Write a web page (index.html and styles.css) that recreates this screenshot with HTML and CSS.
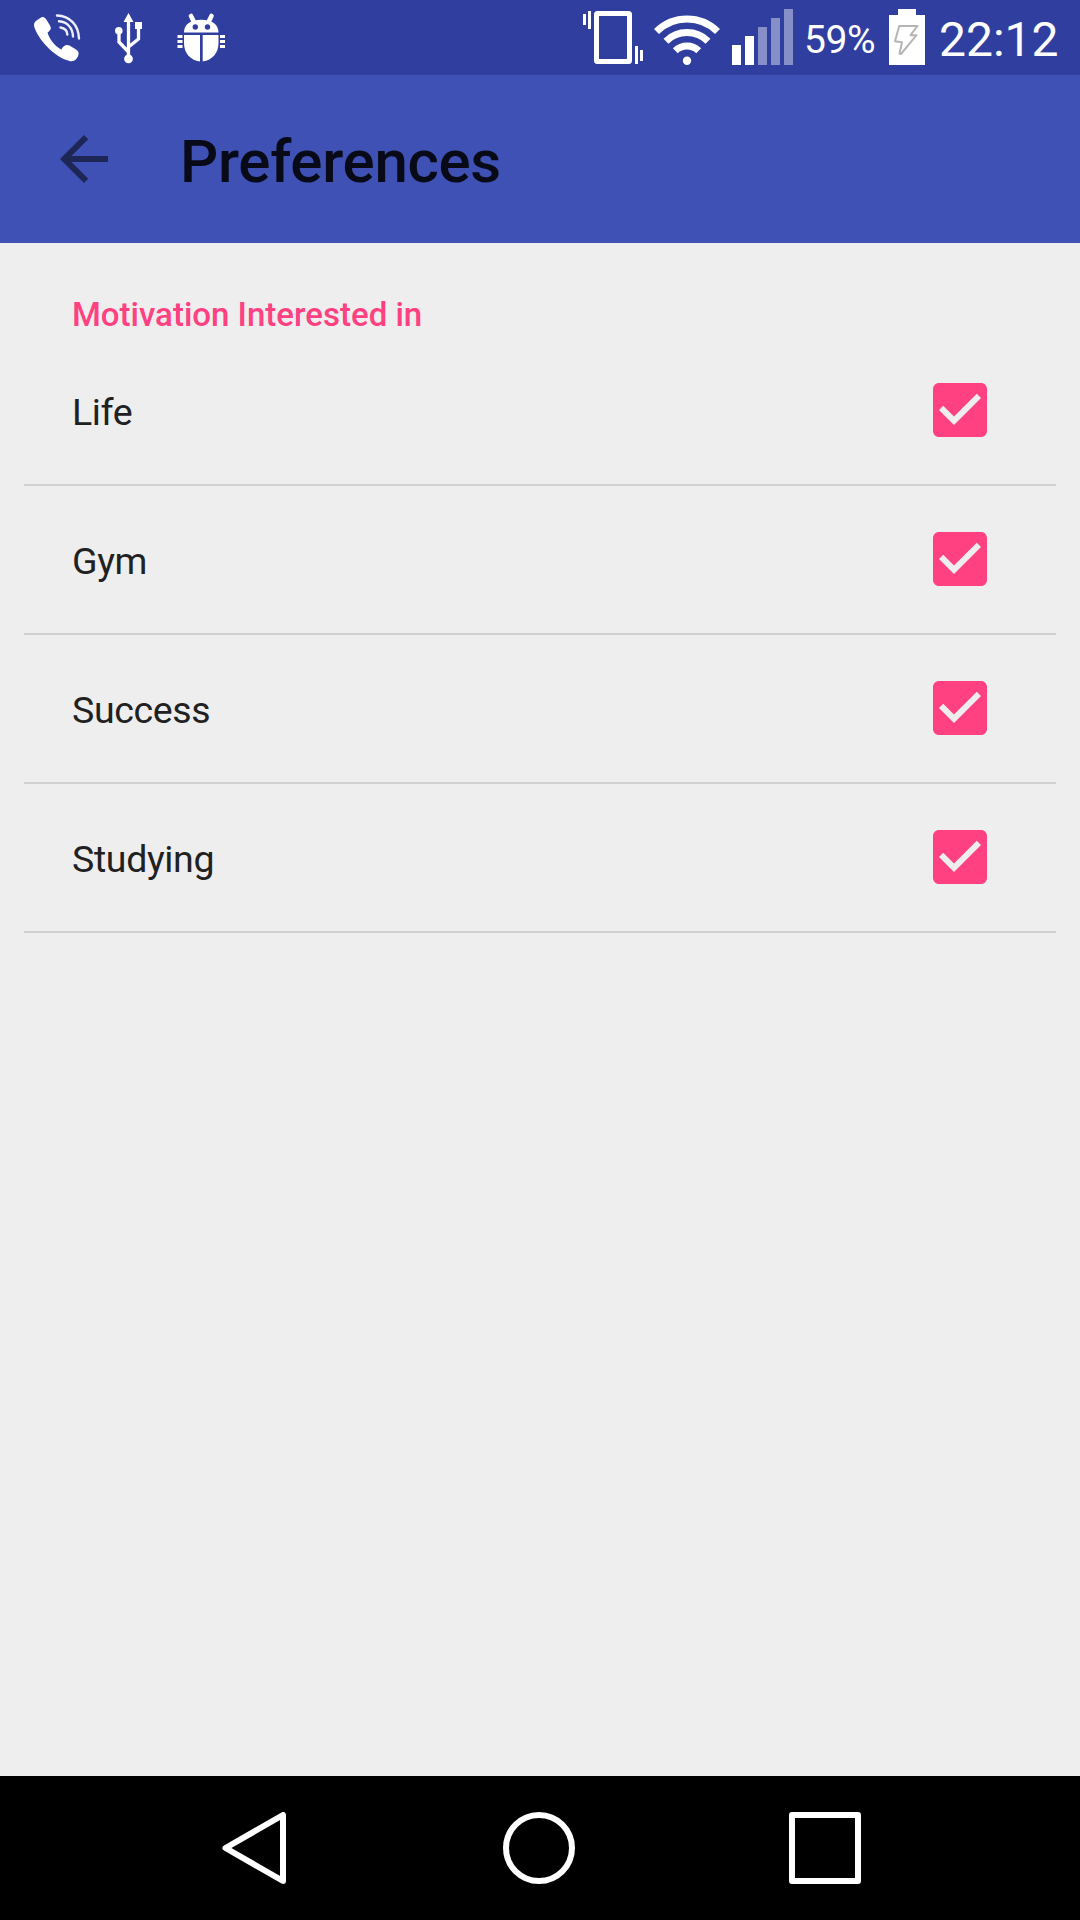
FILE: index.html
```html
<!DOCTYPE html>
<html lang="en">
<head>
  <meta charset="UTF-8">
  <title>Preferences</title>
  <link rel="stylesheet" href="styles.css">
</head>
<body>

  <div class="status-bar">
    <div class="status-left">
      <svg class="icon-phone" width="54" height="75" viewBox="30 0 54 75">
        <path fill="#fff" d="M36.500 20.500L41.500 17.300C43.500 16.500 45 17.500 46.300 19.500L50 25.500C51.500 28.500 51 30.200 47.500 32.500C49 38.500 55 46.500 61.500 49.500C63 45.500 66.500 44 69.500 45.500L76 49.500C79 51.500 79 53.500 78 56.200C76.500 60 73 62 69.500 61C54 57 38 39 34.300 27C33.500 24 34.300 22 36.500 20.500Z"/>
        <g fill="none" stroke="#eceef8" stroke-width="2.400" stroke-linecap="round">
          <path d="M57 15.500C70 16 78.500 25 79 38.500"/>
          <path d="M59 21.300C67.500 22 72.700 28 73 36.500"/>
          <path d="M60.500 27.500C65 28.200 67.200 31 67.300 34.500"/>
        </g>
      </svg>
      <svg class="icon-usb" width="30" height="75" viewBox="114 0 30 75">
        <g fill="none" stroke="#fff" stroke-width="3.300">
          <path d="M128.500 19V58M119 31V42L128.500 52M138.500 26V39L128.500 47"/>
        </g>
        <path fill="#fff" d="M128.500 13L133.500 22H123.500ZM135 22H142V29H135Z"/>
        <circle cx="118.800" cy="30.700" r="3.800" fill="#fff"/>
        <circle cx="128.500" cy="58.800" r="4.400" fill="#fff"/>
      </svg>
      <svg class="icon-bug" width="50" height="75" viewBox="176 0 50 75">
        <path fill="none" stroke="#fff" stroke-width="4.600" stroke-linecap="round" d="M191 16L194 22M211.500 16L208.500 22"/>
        <path fill="#fff" d="M184 32.500C184 24.500 190 19.700 201.300 19.700S218.500 24.500 218.500 32.500ZM184 35H200V61.500C190 60 184 53 184 43ZM202.700 35H218.500V43C218.500 53 212.500 60 202.700 61.500Z"/>
        <path fill="#fff" d="M177.500 35H182.500V38H177.500ZM177.500 40H182.500V43H177.500ZM177.500 45H182.500V48H177.500ZM220 35H225V38H220ZM220 40H225V43H220ZM220 45H225V48H220Z"/>
        <circle cx="195.300" cy="27" r="2.700" fill="#303f9f"/>
        <circle cx="207.500" cy="27" r="2.700" fill="#303f9f"/>
      </svg>
    </div>

    <div class="status-right">
      <svg class="icon-vibrate" width="62" height="75" viewBox="582 0 62 75">
        <rect x="596.500" y="13.500" width="33" height="48" rx="1" fill="none" stroke="#fff" stroke-width="5"/>
        <path fill="#fff" d="M583 14H586V25H583ZM588 11H591V29H588ZM635 46H638V64H635ZM640 50H643V61H640Z"/>
      </svg>
      <svg class="icon-wifi" width="68" height="75" viewBox="653 0 68 75">
        <g fill="none" stroke="#fff" stroke-width="7">
          <path d="M656.500 31.500A43.500 43.500 0 0 1 717.500 31.500"/>
          <path d="M666 41.200A30 30 0 0 1 708 41.200"/>
          <path d="M675.300 50.700A16.800 16.800 0 0 1 698.700 50.700"/>
        </g>
        <circle cx="687" cy="60.700" r="4.200" fill="#fff"/>
      </svg>
      <svg class="icon-signal" width="61" height="75" viewBox="732 0 61 75">
        <path fill="#fff" d="M732 45H741V65H732ZM745 36H754V65H745Z"/>
        <path fill="#868fc7" d="M758 27H767V65H758ZM771 18H780V65H771ZM784 9H793V65H784Z"/>
      </svg>
      <span class="battery-level">59%</span>
      <svg class="icon-battery" width="36" height="75" viewBox="889 0 36 75">
        <path fill="#fff" d="M898 9H916V15H925V65H889V15H898Z"/>
        <path fill="none" stroke="#b5b5b5" stroke-width="2" stroke-linejoin="round" d="M899.200 26H917.500L910.500 35.200H916.500L901 54L899.500 53.500L902 42.200L895 41.200Z"/>
      </svg>
      <span class="clock">22:12</span>
    </div>
  </div>

  <div class="toolbar">
    <svg class="back" width="48" height="48" viewBox="4 4 16 16">
      <path d="M20 11H7.830l5.590-5.590L12 4l-8 8 8 8 1.410-1.410L7.830 13H20v-2z"/>
    </svg>
    <h1>Preferences</h1>
  </div>

  <div class="content">
    <h2>Motivation Interested in</h2>
    <div class="row">
      <span>Life</span>
      <svg class="checkbox" viewBox="3 3 18 18"><path d="M19 3H5c-1.110 0-2 .9-2 2v14c0 1.100.89 2 2 2h14c1.110 0 2-.9 2-2V5c0-1.100-.89-2-2-2zm-9 14l-5-5 1.410-1.410L10 14.170l7.590-7.590L19 8l-9 9z"/></svg>
    </div>
    <div class="row">
      <span>Gym</span>
      <svg class="checkbox" viewBox="3 3 18 18"><path d="M19 3H5c-1.110 0-2 .9-2 2v14c0 1.100.89 2 2 2h14c1.110 0 2-.9 2-2V5c0-1.100-.89-2-2-2zm-9 14l-5-5 1.410-1.410L10 14.170l7.590-7.590L19 8l-9 9z"/></svg>
    </div>
    <div class="row">
      <span>Success</span>
      <svg class="checkbox" viewBox="3 3 18 18"><path d="M19 3H5c-1.110 0-2 .9-2 2v14c0 1.100.89 2 2 2h14c1.110 0 2-.9 2-2V5c0-1.100-.89-2-2-2zm-9 14l-5-5 1.410-1.410L10 14.170l7.590-7.590L19 8l-9 9z"/></svg>
    </div>
    <div class="row">
      <span>Studying</span>
      <svg class="checkbox" viewBox="3 3 18 18"><path d="M19 3H5c-1.110 0-2 .9-2 2v14c0 1.100.89 2 2 2h14c1.110 0 2-.9 2-2V5c0-1.100-.89-2-2-2zm-9 14l-5-5 1.410-1.410L10 14.170l7.590-7.590L19 8l-9 9z"/></svg>
    </div>
  </div>

  <div class="nav-bar">
    <svg width="64" height="72" viewBox="0 0 64 72">
      <path d="M61 3V69L3.500 36Z"/>
    </svg>
    <svg class="home" width="72" height="72" viewBox="0 0 72 72">
      <circle cx="36" cy="36" r="33"/>
    </svg>
    <svg width="72" height="72" viewBox="0 0 72 72">
      <rect x="3" y="3" width="66" height="66"/>
    </svg>
  </div>

</body>
</html>
```
FILE: styles.css
```css
* {
  box-sizing: border-box;
}

body {
  margin: 0;
  height: 1920px;
  display: flex;
  flex-direction: column;
  font-family: Roboto, sans-serif;
  background-color: #eeeeee;
  overflow: hidden;
}

svg {
  display: block;
  flex: none;
}

.status-bar {
  height: 75px;
  display: flex;
  justify-content: space-between;
  padding: 0 20px 0 30px;
  background-color: #303f9f;
  color: #fff;
}

.status-left,
.status-right {
  display: flex;
  height: 75px;
}

.icon-usb {
  margin-left: 30px;
}

.icon-bug {
  margin-left: 32px;
}

.icon-wifi {
  margin-left: 9px;
}

.icon-signal {
  margin-left: 11px;
}

.battery-level {
  width: 96px;
  padding-left: 11px;
  font-size: 39px;
  line-height: 81px;
  letter-spacing: -0.4px;
}

.clock {
  width: 135px;
  padding-left: 14px;
  font-size: 48px;
  line-height: 80px;
  white-space: nowrap;
}

.toolbar {
  height: 168px;
  display: flex;
  align-items: center;
  padding-left: 60px;
  background-color: #3f51b5;
}

.back {
  fill: #1d2654;
}

.toolbar h1 {
  margin: 0 0 0 72px;
  padding-top: 5px;
  font-size: 60px;
  font-weight: 500;
  line-height: 72px;
  letter-spacing: -0.3px;
  color: #080a17;
}

.content {
  flex: 1;
  padding: 0 24px;
}

.content h2 {
  margin: 0;
  height: 94px;
  padding: 52px 0 0 48px;
  font-size: 33px;
  font-weight: 500;
  line-height: 40px;
  color: #ff4081;
}

.row {
  height: 149px;
  display: flex;
  justify-content: space-between;
  align-items: center;
  padding: 0 69px 1px 48px;
  border-bottom: 2px solid #d0d0d0;
}

.row span {
  padding-top: 4px;
  font-size: 37.5px;
  line-height: 44px;
  letter-spacing: -0.35px;
  color: #212121;
}

.checkbox {
  width: 54px;
  height: 54px;
  fill: #ff4081;
}

.nav-bar {
  height: 144px;
  display: flex;
  align-items: center;
  justify-content: space-between;
  padding: 0 219px 0 222px;
  background-color: #000;
}

.nav-bar .home {
  margin-left: 3px;
}

.nav-bar svg {
  fill: none;
  stroke: #fff;
  stroke-width: 6;
  stroke-linejoin: round;
}
```
